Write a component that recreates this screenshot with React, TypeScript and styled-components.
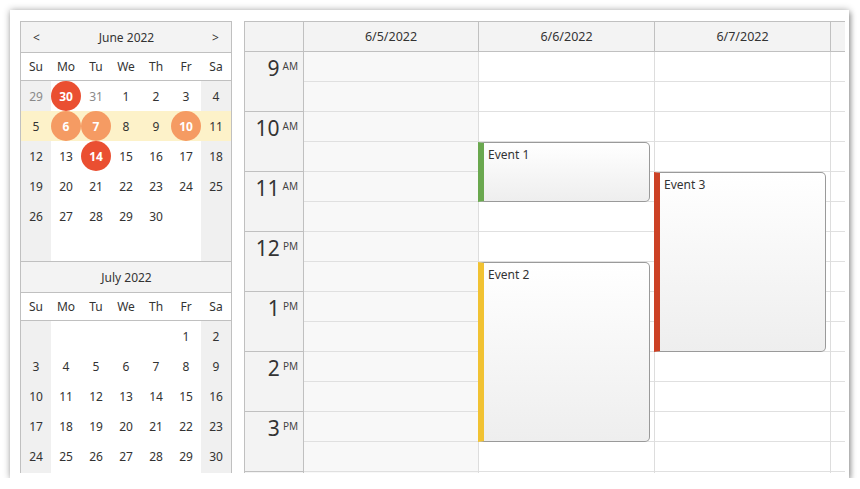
import React from "react";
import styled, { createGlobalStyle } from "styled-components";

const GlobalStyle = createGlobalStyle`
  html, body {
    margin: 0;
    padding: 0;
    background: #ffffff;
  }
  body {
    font-family: "Noto Sans", "Open Sans", sans-serif;
    color: #333333;
  }
  * {
    box-sizing: border-box;
  }
`;

// 月ごとのデータ
type Day = {
  n: number | null;
  other?: boolean;
  mark?: "red" | "orange";
};

const d = (n: number | null, other = false, mark?: "red" | "orange"): Day => ({ n, other, mark });

const june: Day[][] = [
  [d(29, true), d(30, true, "red"), d(31, true), d(1), d(2), d(3), d(4)],
  [d(5), d(6, false, "orange"), d(7, false, "orange"), d(8), d(9), d(10, false, "orange"), d(11)],
  [d(12), d(13), d(14, false, "red"), d(15), d(16), d(17), d(18)],
  [d(19), d(20), d(21), d(22), d(23), d(24), d(25)],
  [d(26), d(27), d(28), d(29), d(30), d(null), d(null)],
  [d(null), d(null), d(null), d(null), d(null), d(null), d(null)],
];

// 最終行は枠で切れて見えないので空のまま
const july: Day[][] = [
  [d(null), d(null), d(null), d(null), d(null), d(1), d(2)],
  [d(3), d(4), d(5), d(6), d(7), d(8), d(9)],
  [d(10), d(11), d(12), d(13), d(14), d(15), d(16)],
  [d(17), d(18), d(19), d(20), d(21), d(22), d(23)],
  [d(24), d(25), d(26), d(27), d(28), d(29), d(30)],
  [d(null), d(null), d(null), d(null), d(null), d(null), d(null)],
];

const dayNames = ["Su", "Mo", "Tu", "We", "Th", "Fr", "Sa"];

const hours = [
  { h: "9", ap: "AM" },
  { h: "10", ap: "AM" },
  { h: "11", ap: "AM" },
  { h: "12", ap: "PM" },
  { h: "1", ap: "PM" },
  { h: "2", ap: "PM" },
  { h: "3", ap: "PM" },
  { h: "", ap: "" },
];

const columns = [
  { title: "6/5/2022", off: true },
  { title: "6/6/2022", off: false },
  { title: "6/7/2022", off: false },
];

const events = [
  { col: 1, text: "Event 1", start: 3, slots: 2, color: "#6aa84f" },
  { col: 1, text: "Event 2", start: 7, slots: 6, color: "#f1c232" },
  { col: 2, text: "Event 3", start: 4, slots: 6, color: "#cc4125" },
];

const SLOT = 30;

export default function App() {
  return (
    <>
      <GlobalStyle />
      <Frame>
        <Content>
          <Navigator>
            <Month title="June 2022" weeks={june} first highlightRow={1} />
            <Month title="July 2022" weeks={july} />
          </Navigator>
          <Calendar>
            <HeaderRow>
              <HeaderCell />
              {columns.map((c) => (
                <HeaderCell key={c.title}>{c.title}</HeaderCell>
              ))}
              <HeaderCell $last />
            </HeaderRow>
            <Body>
              <RowHeader>
                {hours.map((h, i) => (
                  <HourCell key={i}>
                    <HourNum>{h.h}</HourNum>
                    <HourAp>{h.ap}</HourAp>
                  </HourCell>
                ))}
              </RowHeader>
              {columns.map((c, ci) => (
                <DayColumn key={c.title}>
                  {Array.from({ length: 16 }).map((_, i) => (
                    <Slot key={i} $off={c.off} />
                  ))}
                  {events
                    .filter((e) => e.col === ci)
                    .map((e) => (
                      <Event
                        key={e.text}
                        $color={e.color}
                        style={{ top: e.start * SLOT, height: e.slots * SLOT }}
                      >
                        {e.text}
                      </Event>
                    ))}
                </DayColumn>
              ))}
              <Gutter>
                {Array.from({ length: 16 }).map((_, i) => (
                  <Slot key={i} />
                ))}
              </Gutter>
            </Body>
          </Calendar>
        </Content>
      </Frame>
    </>
  );
}

const Month = ({
  title,
  weeks,
  first,
  highlightRow,
}: {
  title: string;
  weeks: Day[][];
  first?: boolean;
  highlightRow?: number;
}) => (
  <div>
    <MonthHeader $first={first}>
      <Arrow>{first ? "<" : ""}</Arrow>
      <MonthTitle>{title}</MonthTitle>
      <Arrow>{first ? ">" : ""}</Arrow>
    </MonthHeader>
    <DayNames>
      {dayNames.map((n) => (
        <DayName key={n}>{n}</DayName>
      ))}
    </DayNames>
    <DaysGrid>
      {weeks.map((week, wi) =>
        week.map((day, di) => (
          <DayCell
            key={`${wi}-${di}`}
            $weekend={di === 0 || di === 6}
            $week={wi === highlightRow}
            $other={day.other}
          >
            {day.mark ? <Circle $tone={day.mark}>{day.n}</Circle> : day.n}
          </DayCell>
        ))
      )}
    </DaysGrid>
  </div>
);

const Frame = styled.div`
  margin: 10px 0 0 10px;
  width: 839px;
  height: 468px;
  background: #ffffff;
  padding: 11px 4px 5px 10px;
  box-shadow: 0 0 7px rgba(0, 0, 0, 0.32), 2px 3px 5px rgba(0, 0, 0, 0.25);
`;

const Content = styled.div`
  display: flex;
  gap: 12px;
  height: 100%;
  overflow: hidden;
`;

const Navigator = styled.div`
  flex: 0 0 211px;
  border: 1px solid #c0c0c0;
  border-bottom: none;
  font-size: 12px;
`;

const MonthHeader = styled.div<{ $first?: boolean }>`
  height: ${(p) => (p.$first ? 31 : 32)}px;
  display: flex;
  align-items: center;
  justify-content: space-between;
  padding: 0 11px 0 12px;
  background: #f3f3f3;
  border-top: ${(p) => (p.$first ? "none" : "1px solid #c0c0c0")};
  border-bottom: 1px solid #c0c0c0;
  color: #333333;
`;

const Arrow = styled.span`
  width: 8px;
  font-size: 12px;
`;

const MonthTitle = styled.span`
  font-size: 12px;
`;

const DayNames = styled.div`
  display: grid;
  grid-template-columns: repeat(7, 30px);
  height: 28px;
  border-bottom: 1px solid #c0c0c0;
  background: #ffffff;
`;

const DayName = styled.div`
  display: flex;
  align-items: center;
  justify-content: center;
  font-size: 12px;
  color: #333333;
`;

const DaysGrid = styled.div`
  display: grid;
  grid-template-columns: repeat(7, 30px);
  grid-auto-rows: 30px;
`;

const DayCell = styled.div<{ $weekend: boolean; $week: boolean; $other?: boolean }>`
  display: flex;
  align-items: center;
  justify-content: center;
  font-size: 12px;
  background: ${(p) => (p.$week ? "#fdf2c9" : p.$weekend ? "#f0f0f0" : "#ffffff")};
  color: ${(p) => (p.$other ? "#8a8a8a" : "#333333")};
`;

const Circle = styled.span<{ $tone: "red" | "orange" }>`
  width: 30px;
  height: 30px;
  border-radius: 50%;
  display: flex;
  align-items: center;
  justify-content: center;
  background: ${(p) => (p.$tone === "red" ? "#ea4f31" : "#f59b63")};
  color: #ffffff;
  font-weight: bold;
`;

const Calendar = styled.div`
  flex: 1;
  min-width: 0;
  border-left: 1px solid #c0c0c0;
  border-top: 1px solid #c0c0c0;
  display: flex;
  flex-direction: column;
  overflow: hidden;
`;

const HeaderRow = styled.div`
  display: grid;
  grid-template-columns: 59px 175px 176px 176px 1fr;
  height: 30px;
  flex-shrink: 0;
  background: #f3f3f3;
  border-bottom: 1px solid #c0c0c0;
`;

const HeaderCell = styled.div<{ $last?: boolean }>`
  display: flex;
  align-items: center;
  justify-content: center;
  font-size: 12.5px;
  color: #333333;
  border-right: ${(p) => (p.$last ? "none" : "1px solid #c0c0c0")};
`;

const Body = styled.div`
  display: grid;
  grid-template-columns: 59px 175px 176px 176px 1fr;
  align-items: start;
`;

const RowHeader = styled.div`
  display: flex;
  flex-direction: column;
`;

const HourCell = styled.div`
  height: 60px;
  background: #f3f3f3;
  border-right: 1px solid #c0c0c0;
  border-bottom: 1px solid #c0c0c0;
  display: flex;
  justify-content: flex-end;
  align-items: flex-start;
  padding: 3px 5px 0 0;
  color: #333333;
`;

const HourNum = styled.span`
  font-size: 21px;
  line-height: 26px;
`;

const HourAp = styled.span`
  font-size: 10px;
  line-height: 10px;
  margin-left: 3px;
  margin-top: 6px;
  color: #444444;
`;

const DayColumn = styled.div`
  position: relative;
  border-right: 1px solid #dddddd;
`;

const Gutter = styled.div`
  display: flex;
  flex-direction: column;
`;

const Slot = styled.div<{ $off?: boolean }>`
  height: 30px;
  border-bottom: 1px solid #e0e0e0;
  background: ${(p) => (p.$off ? "#f8f8f8" : "#ffffff")};
`;

const Event = styled.div<{ $color: string }>`
  position: absolute;
  left: -1px;
  right: 4px;
  background: linear-gradient(to bottom, #ffffff, #eeeeee);
  border: 1px solid #9a9a9a;
  border-left: 6px solid ${(p) => p.$color};
  border-radius: 0 5px 5px 0;
  padding: 4px 0 0 4px;
  font-size: 12px;
  line-height: 16px;
  color: #333333;
  overflow: hidden;
`;
